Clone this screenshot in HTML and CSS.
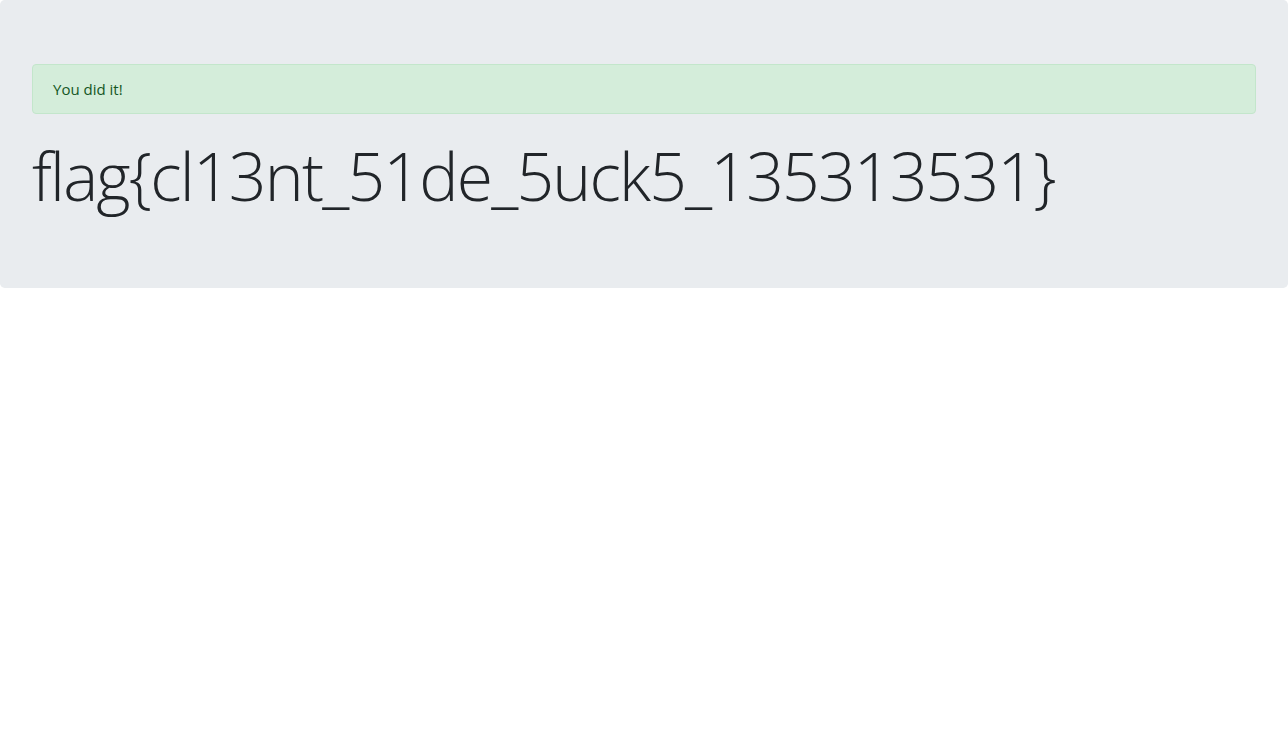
FILE: index.html
```html
<!DOCTYPE html>
<html>
<head>
<meta charset="utf-8">
<link rel="stylesheet" href="styles.css">
</head>
<body>
<div class="jumbotron">
  <div class="alert">You did it!</div>
  <h1 class="display">flag{cl13nt_51de_5uck5_135313531}</h1>
</div>
</body>
</html>
```
FILE: styles.css
```css
html, body { margin: 0; padding: 0; }
body {
  font-family: "Open Sans", "Noto Sans", sans-serif;
  font-size: 16px;
  line-height: 1.5;
  color: #212529;
  background: #fff;
}
.jumbotron {
  background: #e9ecef;
  border-radius: 4.8px;
  padding: 64px 32px 64px;
  height: 288px;
  box-sizing: border-box;
}
.alert {
  background: #d4edda;
  border: 1px solid #c3e6cb;
  color: #155724;
  border-radius: 4px;
  padding: 13px 20px 11px;
  font-size: 15px;
  height: 50px;
  box-sizing: border-box;
  margin-bottom: 16px;
}
.display {
  margin: 0;
  padding-top: 4px;
  font-family: "Open Sans", "Noto Sans", sans-serif;
  font-size: 66px;
  font-weight: 300;
  line-height: 82px;
  letter-spacing: -1.8px;
  color: #212529;
}
```
